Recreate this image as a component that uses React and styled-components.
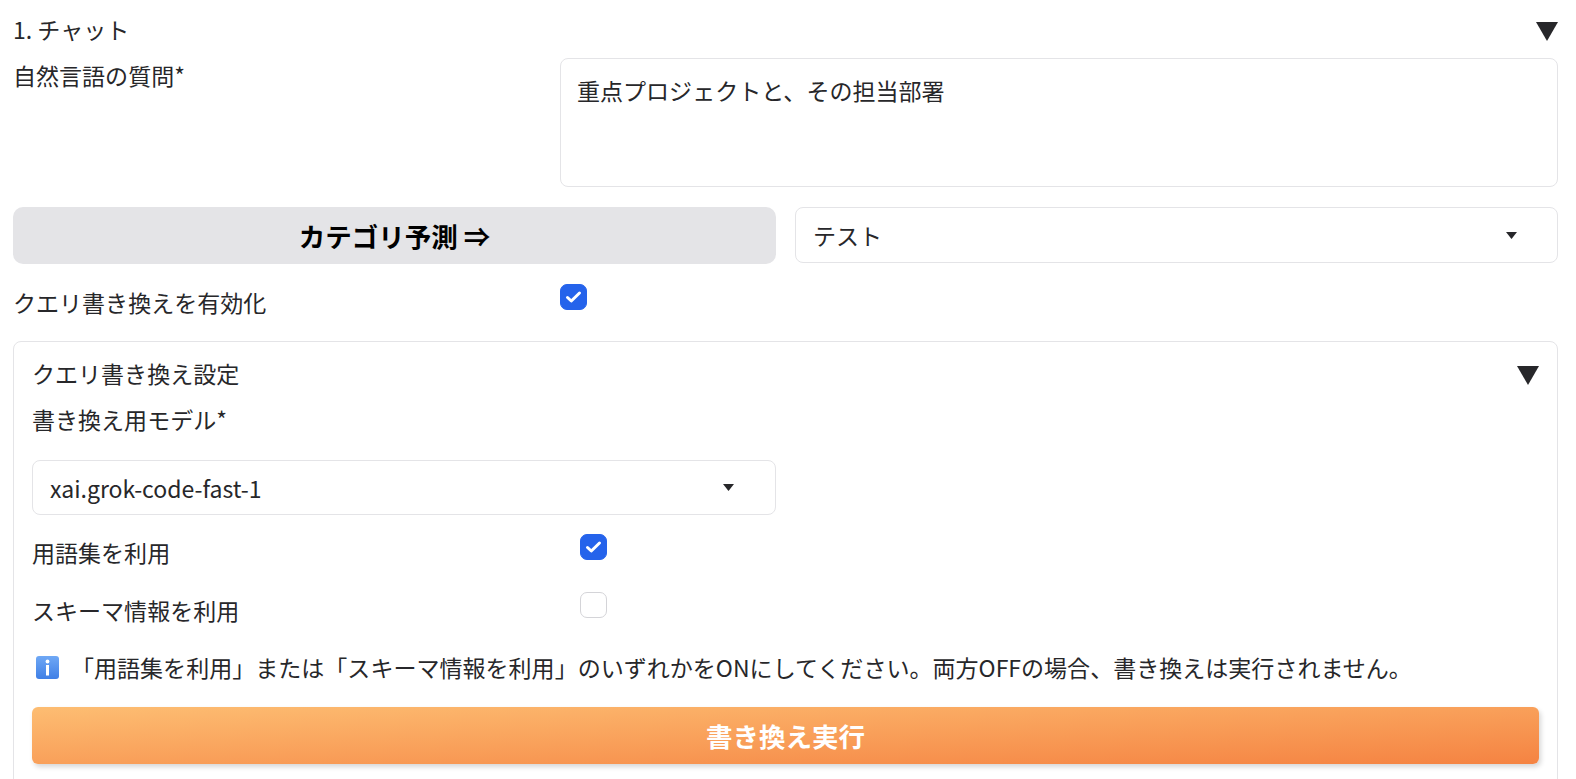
import React from 'react'
import styled, { createGlobalStyle } from 'styled-components'

const Global = createGlobalStyle`
html, body {
  margin: 0;
  padding: 0;
  height: 100%;
  overflow: hidden;
  background: #fff;
}
`

const Page = styled.div`
  height: 779px;
  overflow: hidden;
  box-sizing: border-box;
  padding: 7px 18px 0 13px;
  font-family: "Noto Sans CJK JP", "Noto Sans", sans-serif;
  font-size: 23.04px;
  color: #27272a;
`

const AccordionHead = styled.div`
  display: flex;
  justify-content: space-between;
  align-items: center;
  height: 44px;
`

const Title = styled.span`
  line-height: 44px;
`

const Row = styled.div`
  display: grid;
  grid-template-columns: ${p => p.$columns || '547px 1fr'};
  column-gap: ${p => p.$gap || 0}px;
  align-items: start;
  margin-top: ${p => p.$top || 0}px;
`

const SubRow = styled(Row)`
  grid-template-columns: 548px 1fr;
`

const Label = styled.div`
  line-height: 34px;
  padding-top: ${p => p.$pad || 0}px;
`

const TextBox = styled.div`
  box-sizing: border-box;
  height: 129px;
  padding: 14px 16px;
  border: 1px solid #e4e4e7;
  border-radius: 8px;
  line-height: 34px;
`

const GrayButton = styled.div`
  height: 57px;
  display: flex;
  align-items: center;
  justify-content: center;
  background: #e4e4e7;
  border-radius: 10px;
  color: #000;
  font-size: 26.5px;
  font-weight: 700;
`

const Select = styled.div`
  box-sizing: border-box;
  height: ${p => p.$height || 56}px;
  display: flex;
  align-items: center;
  justify-content: space-between;
  padding: 0 ${p => p.$right || 40}px 0 17px;
  border: 1px solid #e4e4e7;
  border-radius: 8px;
  background: #fff;
`

const Check = styled.div`
  box-sizing: border-box;
  width: 27px;
  height: 26px;
  display: flex;
  align-items: center;
  justify-content: center;
  border-radius: 7px;
  background: ${p => (p.$on ? '#2563eb' : '#fff')};
  border: 1px solid ${p => (p.$on ? '#2563eb' : '#d4d4d8')};
`

const Panel = styled.div`
  box-sizing: border-box;
  height: 500px;
  margin-top: 22px;
  padding: 9px 18px 0 18px;
  border: 1px solid #e4e4e7;
  border-radius: 8px;
`

const SubLabel = styled.div`
  line-height: 34px;
  margin-top: 7px;
`

const ShortSelect = styled.div`
  width: 744px;
  margin-top: 24px;
`

const Note = styled.div`
  display: flex;
  align-items: center;
  gap: 12px;
  margin-top: 23px;
  padding-left: 4px;
  line-height: 34px;
`

const RunButton = styled.div`
  height: 57px;
  margin-top: 23px;
  display: flex;
  align-items: center;
  justify-content: center;
  border-radius: 6px;
  background: linear-gradient(to bottom right, #fdbd72 0%, #f58342 100%);
  box-shadow: 2px 3px 5px rgba(0, 0, 0, 0.16);
  color: #fff;
  font-size: 26.5px;
  font-weight: 700;
`

const TriangleSvg = styled.svg`
  margin-top: 4px;
`

const Triangle = () => (
  <TriangleSvg width="22" height="19" viewBox="0 0 22 19">
    <path d="M0 0H22L11 19Z" fill="#27272a" />
  </TriangleSvg>
)

const Caret = () => (
  <svg width="11" height="7" viewBox="0 0 11 7">
    <path d="M0 0H11L5.5 7Z" fill="#27272a" />
  </svg>
)

const Tick = () => (
  <svg width="17" height="14" viewBox="0 0 17 14">
    <path
      d="M2.5 7.5L6.3 11L14.5 3"
      fill="none"
      stroke="#fff"
      strokeWidth="3"
      strokeLinecap="round"
      strokeLinejoin="round"
    />
  </svg>
)

const InfoIcon = () => (
  <svg width="23" height="23" viewBox="0 0 23 23">
    <defs>
      <linearGradient id="infoBg" x1="0" y1="0" x2="0" y2="1">
        <stop offset="0" stopColor="#6fa8f5" />
        <stop offset="1" stopColor="#3f7fe6" />
      </linearGradient>
    </defs>
    <rect x="0" y="0" width="23" height="23" rx="3" fill="url(#infoBg)" />
    <circle cx="11.5" cy="5.5" r="1.9" fill="#fff" />
    <rect x="10" y="9" width="3" height="10.5" fill="#fff" />
  </svg>
)

const App = () => {
  return (
    <Page>
      <Global />
      <AccordionHead>
        <Title>1. チャット</Title>
        <Triangle />
      </AccordionHead>
      <Row $top={7}>
        <Label>自然言語の質問*</Label>
        <TextBox>重点プロジェクトと、その担当部署</TextBox>
      </Row>
      <Row $top={20} $columns="763px 1fr" $gap={19}>
        <GrayButton>カテゴリ予測 ⇒</GrayButton>
        <Select>
          テスト
          <Caret />
        </Select>
      </Row>
      <Row $top={20}>
        <Label $pad={1}>クエリ書き換えを有効化</Label>
        <Check $on>
          <Tick />
        </Check>
      </Row>
      <Panel>
        <AccordionHead>
          <Title>クエリ書き換え設定</Title>
          <Triangle />
        </AccordionHead>
        <SubLabel>書き換え用モデル*</SubLabel>
        <ShortSelect>
          <Select $height={55} $right={41}>
            xai.grok-code-fast-1
            <Caret />
          </Select>
        </ShortSelect>
        <SubRow $top={19}>
          <Label $pad={1}>用語集を利用</Label>
          <Check $on>
            <Tick />
          </Check>
        </SubRow>
        <SubRow $top={23}>
          <Label $pad={1}>スキーマ情報を利用</Label>
          <Check />
        </SubRow>
        <Note>
          <InfoIcon />
          「用語集を利用」または「スキーマ情報を利用」のいずれかをONにしてください。両方OFFの場合、書き換えは実行されません。
        </Note>
        <RunButton>書き換え実行</RunButton>
      </Panel>
    </Page>
  )
}

export default App
